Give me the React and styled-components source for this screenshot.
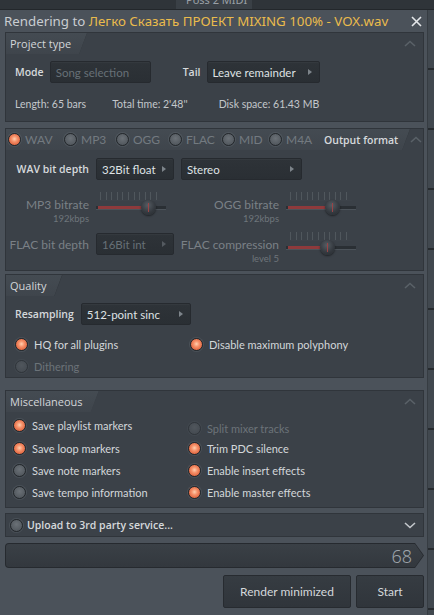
import React from "react";
import styled, { createGlobalStyle } from "styled-components";

const GlobalStyle = createGlobalStyle`
	html, body {
		margin: 0;
		padding: 0;
		background: #2b3035;
	}
	body {
		font-family: "Lato", "Noto Sans", sans-serif;
		font-size: 11px;
		color: #d3d7da;
	}
`;

const semibold = `
	font-family: "Open Sans", "Noto Sans", sans-serif;
	font-weight: 600;
	font-size: 10.5px;
`;

const Screen = styled.div`
	width: 434px;
	height: 615px;
	display: flex;
	flex-direction: column;
	overflow: hidden;
	background: #2b3035;
`;

const AppPeek = styled.div`
	height: 10px;
	flex: none;
	display: flex;
	overflow: hidden;
	background: linear-gradient(90deg, #2f3439 0 176px, #3a4046 176px 252px, #2f3439 252px);
	border-bottom: 1px solid #23272b;
	box-sizing: border-box;
`;

const PeekLabel = styled.span`
	margin: -7px 0 0 186px;
	font-family: "Noto Sans", sans-serif;
	font-size: 11px;
	line-height: 14px;
	color: #9aa0a6;
`;

const Body = styled.div`
	flex: 1;
	display: flex;
`;

const Dialog = styled.div`
	width: 427px;
	flex: none;
	display: flex;
	flex-direction: column;
	gap: 6px;
	padding: 0 3px 0 5px;
	box-sizing: border-box;
	background: #4b525a;
`;

const AppEdge = styled.div`
	flex: 1;
	border-left: 1px solid #363c42;
	background:
		repeating-linear-gradient(180deg, transparent 0 58px, #262a2e 58px 60px),
		#41484f;
`;

const TitleBar = styled.div`
	height: 22px;
	margin: 0 0 -6px -1px;
	display: flex;
	align-items: center;
	justify-content: space-between;
	font-family: "Noto Sans", sans-serif;
	font-size: 13.3px;
	color: #c9cdd1;
`;

const FileName = styled.span`
	color: #eabb4c;
`;

const Close = styled.span`
	margin-right: 2px;
	display: flex;
`;

const Panel = styled.section`
	border: 1px solid #30353b;
	background: #3b4148;
	display: flex;
	flex-direction: column;
	height: ${(p) => p.$h}px;
	margin-top: ${(p) => p.$mt || 0}px;
	box-sizing: border-box;
`;

const PanelHead = styled.div`
	height: 21px;
	flex: none;
	display: flex;
	align-items: center;
	justify-content: space-between;
`;

const Tab = styled.div`
	height: 100%;
	display: flex;
	align-items: center;
	white-space: nowrap;
	padding: 0 ${(p) => p.$pr || 16}px 0 ${(p) => (p.$pl != null ? p.$pl : 4)}px;
	background: linear-gradient(#444b52, #3f454c);
	clip-path: polygon(0 0, 100% 0, calc(100% - 8px) 100%, 0 100%);
	position: relative;
	&::after {
		content: "";
		position: absolute;
		right: 3px;
		top: -1px;
		width: 1px;
		height: 24px;
		background: #2c3136;
		transform: rotate(20deg);
	}
`;

const TabTitle = styled.span`
	font-family: "Open Sans", "Noto Sans", sans-serif;
	font-size: 11px;
	color: #d3d6d9;
`;

const Caret = styled.svg`
	margin-right: 7px;
	flex: none;
`;

const PanelBody = styled.div`
	flex: 1;
	padding: ${(p) => p.$pad};
	display: flex;
	flex-direction: column;
	gap: ${(p) => p.$gap || 0}px;
`;

const Row = styled.div`
	display: flex;
	align-items: center;
	gap: ${(p) => p.$gap || 6}px;
`;

const Label = styled.span`
	${semibold};
	color: #d6d9dc;
	white-space: nowrap;
	margin-left: ${(p) => p.$ml || 0}px;
`;

const Info = styled.span`
	font-size: 10.5px;
	color: #c3c7cb;
	margin-right: ${(p) => p.$mr || 0}px;
`;

const Select = styled.div`
	width: ${(p) => p.$w}px;
	height: 22px;
	box-sizing: border-box;
	display: flex;
	align-items: center;
	justify-content: space-between;
	padding: 0 7px 0 5px;
	border: 1px solid #262a2f;
	border-radius: 2px;
	background: linear-gradient(#2e3338, #2a2f34);
	box-shadow: inset 0 1px 0 rgba(255, 255, 255, 0.03);
	color: ${(p) => (p.$off ? "#677077" : "#dfe2e4")};
	font-size: 11.5px;
	margin-top: ${(p) => p.$mt || 0}px;
	grid-column: ${(p) => p.$span || "auto"};
	&::after {
		content: "";
		display: ${(p) => (p.$arrow === false ? "none" : "block")};
		border-left: 4px solid ${(p) => (p.$off ? "#545a60" : "#7d848a")};
		border-top: 3.5px solid transparent;
		border-bottom: 3.5px solid transparent;
	}
`;

const FormatGrid = styled.div`
	display: grid;
	grid-template-columns: 78px 78px 98px 72px;
	grid-template-rows: 22px 34px 30px;
	column-gap: 7px;
	row-gap: 7px;
	padding: 8px 0 0 5px;
`;

const RightCell = styled.div`
	display: flex;
	flex-direction: column;
	align-items: flex-end;
	justify-content: ${(p) => (p.$top ? "flex-start" : "center")};
	padding-top: ${(p) => p.$pt || 0}px;
	line-height: 13px;
	white-space: nowrap;
`;

const DimLabel = styled.span`
	color: #7a8086;
	font-size: 12px;
`;

const Sub = styled.span`
	color: #6e757b;
	font-size: 9.5px;
	line-height: 11px;
	margin-top: 2px;
`;

const SliderBox = styled.div`
	width: 70px;
	display: flex;
	flex-direction: column;
	margin-top: ${(p) => p.$mt || 0}px;
`;

const Ticks = styled.div`
	height: 8px;
	margin: 0 4px;
	border-bottom: 1px solid #3f454b;
	background: repeating-linear-gradient(90deg, #5a6167 0 1px, transparent 1px 5.6px);
	opacity: 0.7;
`;

const Track = styled.div`
	height: 14px;
	position: relative;
	display: flex;
	align-items: center;
	&::before {
		content: "";
		flex: 1;
		height: 3px;
		background: #2a2f34;
		border-bottom: 1px solid #4c535a;
	}
`;

const Fill = styled.div`
	position: absolute;
	left: 2px;
	top: 5px;
	height: 3px;
	background: #8e3a3c;
`;

const Knob = styled.div`
	position: absolute;
	top: -1px;
	width: 15px;
	height: 15px;
	margin-left: -7px;
	border-radius: 50%;
	background: radial-gradient(circle at 45% 35%, #555c63 0, #353a40 55%, #25292d 100%);
	box-shadow: 0 1px 2px rgba(0, 0, 0, 0.5);
	&::after {
		content: "";
		position: absolute;
		left: 7px;
		top: 3px;
		width: 1px;
		height: 9px;
		background: #9a4446;
	}
`;

const Slider = ({ value, mt }) => (
	<SliderBox $mt={mt}>
		<Ticks />
		<Track>
			<Fill style={{ width: `${value * 64}px` }} />
			<Knob style={{ left: `${4 + value * 62}px` }} />
		</Track>
	</SliderBox>
);

const RadioDot = styled.span`
	width: 11px;
	height: 11px;
	flex: none;
	border-radius: 50%;
	border: 1px solid #24282c;
	box-shadow: 0 0 0 1px rgba(120, 128, 136, 0.25);
	background: ${(p) =>
		p.$on
			? "radial-gradient(circle at 50% 45%, #ffd0b0 0, #f6916a 35%, #d95a35 85%)"
			: "radial-gradient(circle at 50% 40%, #6b7177 0, #52585e 75%)"};
	opacity: ${(p) => (p.$off ? 0.45 : 1)};
`;

const RadioItem = styled.span`
	display: flex;
	align-items: center;
	gap: 6px;
	color: ${(p) => (p.$off ? "#6c7379" : "#d3d7da")};
	font-size: 11px;
	white-space: nowrap;
	margin-top: ${(p) => p.$mt || 0}px;
`;

const Radio = ({ on, off, children, mt }) => (
	<RadioItem $off={off} $mt={mt}>
		<RadioDot $on={on} $off={off} />
		{children}
	</RadioItem>
);

const FormatRadio = styled.span`
	width: ${(p) => p.$w}px;
	flex: none;
	display: flex;
	align-items: center;
	gap: 4px;
	color: #737a80;
	font-size: 12px;
`;

const OptionGrid = styled.div`
	display: grid;
	grid-template-columns: 175px 1fr;
	grid-template-rows: ${(p) => p.$rows || "22px"};
	grid-auto-rows: 22px;
	align-items: center;
	padding: ${(p) => p.$pad};
`;

const UploadBar = styled.div`
	height: 22px;
	flex: none;
	display: flex;
	align-items: center;
	justify-content: space-between;
	padding: 0 0 0 4px;
	border: 1px solid #30353b;
	background: #3b4148;
	color: #d6d9dc;
	margin-top: -1px;
`;

const UploadLeft = styled.span`
	${semibold};
	font-size: 10.5px;
	display: flex;
	align-items: center;
	gap: 4px;
`;

const ProgressOuter = styled.div`
	height: 25px;
	flex: none;
	padding: 1px;
	background: #262a2f;
	border-radius: 4px 0 0 4px;
	clip-path: polygon(0 0, calc(100% - 9px) 0, 100% 50%, calc(100% - 9px) 100%, 0 100%);
	box-sizing: border-box;
`;

const ProgressInner = styled.div`
	height: 100%;
	display: flex;
	align-items: center;
	justify-content: flex-end;
	padding-right: 11px;
	border-radius: 3px 0 0 3px;
	background: linear-gradient(#3a4046, #33383e);
	clip-path: polygon(0 0, calc(100% - 8px) 0, 100% 50%, calc(100% - 8px) 100%, 0 100%);
	font-family: "Noto Sans", sans-serif;
	font-size: 18px;
	font-weight: 300;
	color: #9da3a9;
`;

const Footer = styled.div`
	display: flex;
	justify-content: flex-end;
	gap: 5px;
	margin-top: 1px;
`;

const Button = styled.button`
	width: ${(p) => p.$w}px;
	height: 33px;
	border: 1px solid #272b30;
	border-radius: 2px;
	background: linear-gradient(#363c42, #30353b);
	color: #d4d8db;
	font-family: "Lato", "Noto Sans", sans-serif;
	font-size: 12px;
	cursor: pointer;
`;

const CaretUp = () => (
	<Caret width="12" height="7" viewBox="0 0 12 7">
		<path d="M1 6 L6 1.5 L11 6" fill="none" stroke="#5a6168" strokeWidth="1.6" />
	</Caret>
);

const formats = [
	["WAV", 56],
	["MP3", 52],
	["OGG", 53],
	["FLAC", 53],
	["MID", 47],
	["M4A", 55],
];

const App = () => {
	return (
		<>
			<GlobalStyle />
			<Screen>
				<AppPeek>
					<PeekLabel>Poss 2 MIDI</PeekLabel>
				</AppPeek>
				<Body>
					<Dialog>
						<TitleBar>
							<span>
								Rendering to <FileName>Легко Сказать ПРОЕКТ MIXING 100% - VOX.wav</FileName>
							</span>
							<Close>
								<svg width="11" height="11" viewBox="0 0 11 11">
									<path d="M1 1 L10 10 M10 1 L1 10" stroke="#e4e7e9" strokeWidth="1.6" />
								</svg>
							</Close>
						</TitleBar>

						<Panel $h={90}>
							<PanelHead>
								<Tab>
									<TabTitle>Project type</TabTitle>
								</Tab>
								<CaretUp />
							</PanelHead>
							<PanelBody $pad="7px 0 0 9px" $gap={15}>
								<Row>
									<Label>Mode</Label>
									<Select $w={101} $off $arrow={false}>
										Song selection
									</Select>
									<Label $ml={26}>Tail</Label>
									<Select $w={113}>Leave remainder</Select>
								</Row>
								<Row $gap={0}>
									<Info $mr={20}>Length: 65 bars</Info>
									<Info $mr={25}>Total time: 2'48''</Info>
									<Info>Disk space: 61.43 MB</Info>
								</Row>
							</PanelBody>
						</Panel>

						<Panel $h={143}>
							<PanelHead>
								<Tab $pl={2} $pr={12}>
									{formats.map(([f, w], i) => (
										<FormatRadio key={f} $w={w}>
											<RadioDot $on={i === 0} />
											{f}
										</FormatRadio>
									))}
									<Label>Output format</Label>
								</Tab>
								<CaretUp />
							</PanelHead>
							<FormatGrid>
								<RightCell>
									<Label>WAV bit depth</Label>
								</RightCell>
								<Select $w={78}>32Bit float</Select>
								<Select $w={121} $span="3 / 5">
									Stereo
								</Select>

								<RightCell $top $pt={11}>
									<DimLabel>MP3 bitrate</DimLabel>
									<Sub>192kbps</Sub>
								</RightCell>
								<Slider value={0.77} mt={5} />
								<RightCell $top $pt={11}>
									<DimLabel>OGG bitrate</DimLabel>
									<Sub>192kbps</Sub>
								</RightCell>
								<Slider value={0.67} mt={5} />

								<RightCell $top $pt={10}>
									<DimLabel>FLAC bit depth</DimLabel>
								</RightCell>
								<Select $w={78} $off $mt={5}>
									16Bit int
								</Select>
								<RightCell $top $pt={10}>
									<DimLabel>FLAC compression</DimLabel>
									<Sub>level 5</Sub>
								</RightCell>
								<Slider value={0.6} mt={4} />
							</FormatGrid>
						</Panel>

						<Panel $h={104} $mt={-3}>
							<PanelHead>
								<Tab>
									<TabTitle>Quality</TabTitle>
								</Tab>
								<CaretUp />
							</PanelHead>
							<PanelBody $pad="7px 0 0 9px">
								<Row $gap={7}>
									<Label>Resampling</Label>
									<Select $w={110}>512-point sinc</Select>
								</Row>
								<OptionGrid $pad="8px 0 0 0">
									<Radio on>HQ for all plugins</Radio>
									<Radio on>Disable maximum polyphony</Radio>
									<Radio off>Dithering</Radio>
								</OptionGrid>
							</PanelBody>
						</Panel>

						<Panel $h={118} $mt={6}>
							<PanelHead>
								<Tab>
									<TabTitle>Miscellaneous</TabTitle>
								</Tab>
								<CaretUp />
							</PanelHead>
							<OptionGrid $pad="2px 0 0 7px" $rows="23px">
								<Radio on>Save playlist markers</Radio>
								<Radio off mt={5}>
									Split mixer tracks
								</Radio>
								<Radio on>Save loop markers</Radio>
								<Radio on>Trim PDC silence</Radio>
								<Radio>Save note markers</Radio>
								<Radio on>Enable insert effects</Radio>
								<Radio>Save tempo information</Radio>
								<Radio on>Enable master effects</Radio>
							</OptionGrid>
						</Panel>

						<UploadBar>
							<UploadLeft>
								<RadioDot />
								Upload to 3rd party service...
							</UploadLeft>
							<Caret width="12" height="7" viewBox="0 0 12 7">
								<path d="M1 1 L6 5.5 L11 1" fill="none" stroke="#c3c7cb" strokeWidth="1.6" />
							</Caret>
						</UploadBar>

						<ProgressOuter>
							<ProgressInner>68</ProgressInner>
						</ProgressOuter>

						<Footer>
							<Button $w={128}>Render minimized</Button>
							<Button $w={68}>Start</Button>
						</Footer>
					</Dialog>
					<AppEdge />
				</Body>
			</Screen>
		</>
	);
};

export default App;
